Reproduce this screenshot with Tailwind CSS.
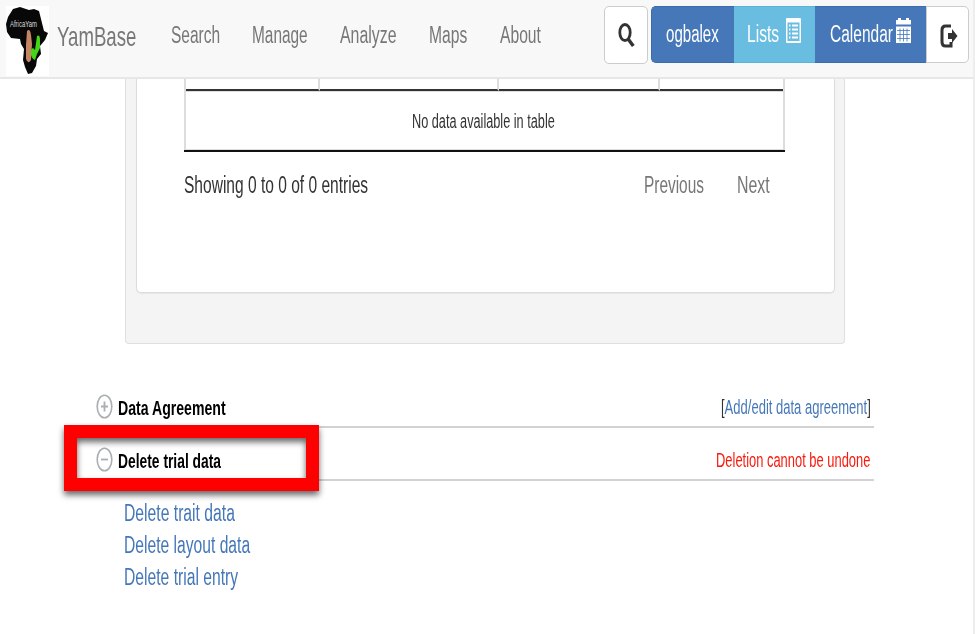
<!DOCTYPE html>
<html lang="en">
<head>
<meta charset="utf-8">
<title>YamBase</title>
<script src="https://cdn.jsdelivr.net/npm/@tailwindcss/browser@4"></script>
</head>
<body class="w-[975px] h-[634px] overflow-hidden bg-white font-['Liberation_Sans',Arial,sans-serif] text-[23px] leading-[23px] whitespace-nowrap text-[#333]">
<div class="relative flex h-[634px] w-[975px] flex-col border-r-2 border-[#ededed]">
  <header class="flex h-[79px] shrink-0 items-start border-b-2 border-[#e7e7e7] bg-[#f8f8f8] text-[#777]">
    <svg class="ml-[6px] mt-[6px] h-[70px] w-[43px] shrink-0 bg-white" viewBox="0 0 43 70">
      <path d="M7 3 L14 1 L17 2 L23 4 L28 3 L33 5 L35 13 L38 25 L42 27 L39 34 L34 40 L35 48 L31 53 L30 60 L26 67 L22 68 L19 61 L17 54 L18 43 L15 38 L14 33 L5 32 L1 26 L0 18 L2 11 Z" fill="#080808"/>
      <path d="M21 25 Q24 22 25 29 L26 38 L25 54 Q22 59 20 53 L20 39 Z" fill="#c78663"/>
      <path d="M31 30 Q34 28 34 34 L34 42 L31 48 L29 54 Q26 53 25 49 Q24 43 27 42 L29 44 Z" fill="#43d516"/>
      <text x="4" y="21" font-size="9" textLength="27" lengthAdjust="spacingAndGlyphs" fill="#ddd">AfricaYam</text>
    </svg>
    <a class="ml-[8px] mt-[23px] w-[114px] origin-left scale-x-[.665] text-[28px] leading-[28px]">YamBase</a>
    <nav class="mt-[24px] flex w-[433px] shrink-0">
      <a class="w-[81px] origin-left"><span class="block origin-left scale-x-[.675]">Search</span></a>
      <a class="w-[88px]"><span class="block origin-left scale-x-[.67]">Manage</span></a>
      <a class="w-[89px]"><span class="block origin-left scale-x-[.69]">Analyze</span></a>
      <a class="w-[71px]"><span class="block origin-left scale-x-[.68]">Maps</span></a>
      <a class="w-[104px]"><span class="block origin-left scale-x-[.68]">About</span></a>
    </nav>
    <button class="mt-[6px] flex h-[58px] w-[44px] shrink-0 items-center justify-center rounded-[5px] border border-[#ccc] bg-white">
      <svg class="h-[26px] w-[17px]" viewBox="0 0 17 26" fill="none" stroke="#333"><ellipse cx="7" cy="10.5" rx="5.2" ry="8" stroke-width="2.8"/><path d="M10.5 17.5 L15.3 24" stroke-width="3.4"/></svg>
    </button>
    <div class="ml-[3px] mt-[5.500px] flex h-[57px] shrink-0 text-white">
      <a class="flex h-full w-[83px] items-center rounded-l-[5px] border border-r-0 border-[#3a6cae] bg-[#4577b9] pl-[14px]"><span class="w-[54px]"><span class="block origin-left scale-x-[.655]">ogbalex</span></span></a>
      <a class="flex h-full w-[81px] items-center border-y border-[#5bb4d8] bg-[#69bde0] pl-[13px]"><span class="w-[39px]"><span class="block origin-left scale-x-[.68]">Lists</span></span>
        <svg class="-mt-[8px] h-[25px] w-[15px] shrink-0" viewBox="0 0 15 25"><rect width="15" height="25" rx="1" fill="#fff"/><rect x="1.500" y="4.500" width="12" height="18.500" fill="#69bde0"/><path d="M3 7.5h1.500M6 7.5h6M3 11.500h1.500M6 11.500h6M3 15.500h1.500M6 15.500h6M3 19.500h1.500M6 19.500h6" stroke="#fff" stroke-width="2"/></svg></a>
      <a class="flex h-full w-[111px] items-center border-y border-[#3a6cae] bg-[#4577b9] pl-[15px]"><span class="w-[66px]"><span class="block origin-left scale-x-[.675]">Calendar</span></span>
        <svg class="-mt-[8px] h-[25px] w-[15px] shrink-0" viewBox="0 0 15 25"><path d="M0 2h2V0h3v2h5V0h3v2h2v4.500H0z" fill="#fff"/><path d="M0 8.500h15V25H0z" fill="#fff"/><path d="M1 12.500h13M1 16.500h13M1 20.500h13M4 10.500v13M7.500 10.500v13M11 10.500v13" stroke="#4577b9" stroke-width=".8"/></svg></a>
      <a class="flex h-full w-[43px] items-center rounded-r-[5px] border border-[#ccc] bg-white pl-[13px]">
        <svg class="mt-[3px] h-[24px] w-[18px]" viewBox="0 0 18 24" fill="none"><path d="M11 2H5.500Q2 2 2 6V18Q2 22 5.500 22H11V18" stroke="#333" stroke-width="3"/><path d="M8 9h4V5l5.500 7-5.500 7v-4H8z" fill="#333"/></svg></a>
    </div>
  </header>

  <section class="ml-[125px] flex h-[265px] w-[720px] shrink-0 flex-col rounded-b-[4px] border border-t-0 border-[#dfdfdf] bg-[#f4f4f4] pl-[10px]">
    <div class="h-[214px] w-[699px] rounded-b-[5px] border border-t-0 border-[#dcdcdc] bg-white pl-[47px] shadow-[0_1px_1px_rgba(0,0,0,.06)]">
      <div class="w-[601px]">
        <div class="flex h-[12px] border-x-2 border-[#ddd]">
          <div class="w-[134px] border-r-2 border-b-2 border-r-[#ddd] border-b-[#333]"></div>
          <div class="w-[179px] border-r-2 border-b-2 border-r-[#ddd] border-b-[#333]"></div>
          <div class="w-[161px] border-r-2 border-b-2 border-r-[#ddd] border-b-[#333]"></div>
          <div class="flex-1 border-b-2 border-[#333]"></div>
        </div>
        <div class="h-[59px] border-x-2 border-y border-[#ddd] pl-[226px] pt-[20px] text-[19.500px] leading-[19px]"><span class="block w-[220px] origin-left scale-x-[.652]">No data available in table</span></div>
        <div class="h-[2px] bg-[#111]"></div>
      </div>
      <div class="mt-[22px] flex">
        <span class="w-[460px]"><span class="block origin-left scale-x-[.676]">Showing 0 to 0 of 0 entries</span></span>
        <span class="w-[93px] text-[#777]"><span class="block origin-left scale-x-[.67]">Previous</span></span>
        <span class="w-[40px] text-[#777]"><span class="block origin-left scale-x-[.69]">Next</span></span>
      </div>
    </div>
  </section>

  <main class="ml-[96px] mt-[37px] w-[778px] text-[20.500px] leading-[21px]">
    <div class="flex h-[47px] border-b-2 border-[#d2d2d2] pt-[12px]">
      <svg class="mt-px h-[25px] w-[17px]" viewBox="0 0 17 25" fill="none" stroke="#aaafaf"><ellipse cx="8.500" cy="12.500" rx="7.300" ry="11.300" stroke-width="1.600"/><path d="M5 12.500h7M8.500 7.500v10" stroke-width="1.800"/></svg>
      <h3 class="ml-[5px] mt-[4px] w-[603px] font-bold text-black"><span class="block origin-left scale-x-[.688]">Data Agreement</span></h3>
      <div class="mt-[3px] w-[150px]"><span class="block origin-left scale-x-[.635]">[<a class="text-[#4577b9]">Add/edit data agreement</a>]</span></div>
    </div>
    <div class="flex h-[53px] border-b-2 border-[#d2d2d2] pt-[18px]">
      <svg class="mt-px h-[25px] w-[17px]" viewBox="0 0 17 25" fill="none" stroke="#aaafaf"><ellipse cx="8.500" cy="12.500" rx="7.300" ry="11.300" stroke-width="1.600"/><path d="M5 12.500h7" stroke-width="1.800"/></svg>
      <h3 class="ml-[5px] mt-[4px] w-[598px] font-bold text-black"><span class="block origin-left scale-x-[.675]">Delete trial data</span></h3>
      <div class="mt-[3px] w-[155px] text-[#f9180c]"><span class="block origin-left scale-x-[.63]">Deletion cannot be undone</span></div>
    </div>
    <div class="ml-[28px] mt-[16px] flex flex-col text-[23px] leading-[32px] text-[#4577b9]">
      <a class="origin-left scale-x-[.683]">Delete trait data</a>
      <a class="origin-left scale-x-[.68]">Delete layout data</a>
      <a class="origin-left scale-x-[.681]">Delete trial entry</a>
    </div>
  </main>
  <div class="absolute left-[64px] top-[425px] h-[66px] w-[255px] border-[13px] border-[#fe0000] drop-shadow-[0_4px_3px_rgba(0,0,0,.6)]"></div>
</div>
</body>
</html>
